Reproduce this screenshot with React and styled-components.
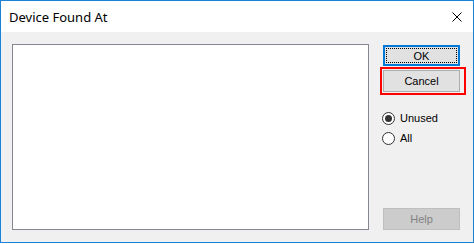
import styled, { createGlobalStyle } from "styled-components";

const GlobalStyle = createGlobalStyle`
  html, body {
    margin: 0;
    padding: 0;
    background: #ffffff;
  }
`;

const Window = styled.div`
  box-sizing: border-box;
  width: 474px;
  height: 243px;
  border: 1px solid #1883d7;
  display: flex;
  flex-direction: column;
  background: #f0f0f0;
`;

const TitleBar = styled.div`
  height: 31px;
  background: #ffffff;
  display: flex;
  align-items: center;
  justify-content: space-between;
  padding: 0 10px 0 8px;

  h1 {
    margin: 0;
    font-family: "Noto Sans", "Open Sans", sans-serif;
    font-weight: 400;
    font-size: 13px;
    color: #000;
  }
`;

const CloseButton = styled.span`
  display: flex;
  width: 10px;
  height: 10px;
  margin-right: 1px;
`;

const Body = styled.div`
  flex: 1;
  display: flex;
  padding: 12px 12px 12px 11px;
  gap: 14px;
  font-family: "Liberation Sans", Arial, sans-serif;
  font-size: 11px;
  color: #000;
`;

const ListBox = styled.div`
  box-sizing: border-box;
  width: 357px;
  height: 186px;
  background: #ffffff;
  border: 1px solid #828790;
`;

const Side = styled.div`
  width: 77px;
  display: flex;
  flex-direction: column;
  padding-top: 1px;
`;

const Button = styled.button`
  box-sizing: border-box;
  width: 77px;
  height: ${(p) => (p.$tall ? 22 : 21)}px;
  padding: 0;
  font-family: "Liberation Sans", Arial, sans-serif;
  font-size: 11px;
  color: ${(p) => (p.disabled ? "#838383" : "#000")};
  background: ${(p) => (p.disabled ? "#cccccc" : "#e1e1e1")};
  border: ${(p) =>
    p.$default ? "2px solid #0078d7" : p.disabled ? "1px solid #bfbfbf" : "1px solid #adadad"};
  display: flex;
  align-items: center;
  justify-content: center;
  position: relative;
  margin-top: ${(p) => (p.$bottom ? "auto" : "0")};

  ${(p) =>
    p.$default &&
    `
    &::after {
      content: "";
      position: absolute;
      inset: 1px;
      border: 1px dotted #000;
    }
  `}
`;

const Highlight = styled.div`
  align-self: flex-start;
  margin: 1px 0 0 -3px;
  padding: 1px 4px 1px 1px;
  border: 2px solid #ff0000;
`;

const RadioGroup = styled.div`
  margin-top: 13px;
  display: flex;
  flex-direction: column;
`;

const RadioRow = styled.label`
  height: 20px;
  display: flex;
  align-items: center;
  gap: 5px;
  margin-left: -1px;
`;

const Circle = styled.span`
  box-sizing: border-box;
  width: 13px;
  height: 13px;
  border-radius: 50%;
  border: 1px solid #333333;
  background: #ffffff;
  display: flex;
  align-items: center;
  justify-content: center;

  &::after {
    content: "";
    width: 7px;
    height: 7px;
    border-radius: 50%;
    background: ${(p) => (p.$checked ? "#333333" : "transparent")};
  }
`;

const Radio = ({ checked, children }) => (
  <RadioRow>
    <Circle $checked={checked} />
    {children}
  </RadioRow>
);

export default function App() {
  return (
    <>
      <GlobalStyle />
      <Window>
        <TitleBar>
          <h1>Device Found At</h1>
          <CloseButton>
            <svg width="10" height="10" viewBox="0 0 10 10">
              <path d="M0.5 0.5 L9.5 9.5 M9.5 0.5 L0.5 9.5" stroke="#000" strokeWidth="1" />
            </svg>
          </CloseButton>
        </TitleBar>
        <Body>
          <ListBox />
          <Side>
            <Button $default>OK</Button>
            <Highlight>
              <Button $tall>Cancel</Button>
            </Highlight>
            <RadioGroup>
              <Radio checked>Unused</Radio>
              <Radio>All</Radio>
            </RadioGroup>
            <Button $tall $bottom disabled>
              Help
            </Button>
          </Side>
        </Body>
      </Window>
    </>
  );
}
